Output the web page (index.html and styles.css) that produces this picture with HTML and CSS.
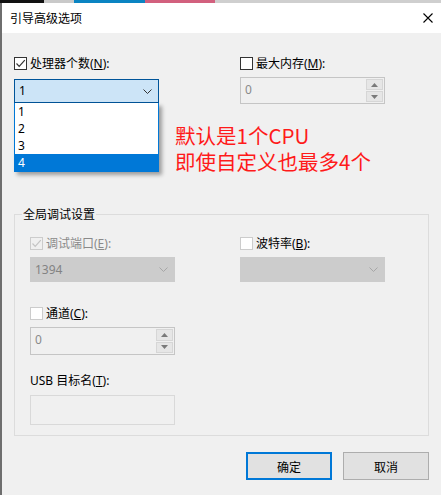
FILE: index.html
```html
<!DOCTYPE html>
<html lang="zh-CN">
<head>
<meta charset="utf-8">
<title>引导高级选项</title>
<link rel="stylesheet" href="styles.css">
</head>
<body>
<div class="strip">
  <span class="seg seg-black"></span>
  <span class="seg seg-gray"></span>
  <span class="seg seg-blue"></span>
  <span class="seg seg-pink"></span>
  <span class="seg seg-rest"></span>
</div>
<div class="win">
  <div class="titlebar">
    <span class="title">引导高级选项</span>
    <svg class="close" width="10" height="10" viewBox="0 0 10 10"><path d="M0.5 0.5 L9.5 9.5 M9.5 0.5 L0.5 9.5" stroke="#000" stroke-width="1.1" fill="none"/></svg>
  </div>
  <div class="content">
    <div class="toprow">
      <div class="col">
        <div class="chk"><span class="box"><svg width="11" height="11" viewBox="0 0 11 11"><path d="M1.5 5.5 L4.2 8.3 L9.8 2.2" stroke="#333" stroke-width="1.2" fill="none"/></svg></span><span>处理器个数(<u>N</u>):</span></div>
        <div class="combo combo-open"><span class="cval">1</span><svg class="chev" width="9" height="5" viewBox="0 0 9 5"><path d="M0.5 0.5 L4.5 4.5 L8.5 0.5" stroke="#333" stroke-width="1" fill="none"/></svg></div>
      </div>
      <div class="col col-right">
        <div class="chk"><span class="box"></span><span>最大内存(<u>M</u>):</span></div>
        <div class="spin spin-top"><span class="sval">0</span><div class="sbtns"><span class="sbtn"><svg width="7" height="4" viewBox="0 0 7 4"><path d="M0 4 L3.5 0 L7 4 Z" fill="#7a7a7a"/></svg></span><span class="sbtn"><svg width="7" height="4" viewBox="0 0 7 4"><path d="M0 0 L3.5 4 L7 0 Z" fill="#7a7a7a"/></svg></span></div></div>
      </div>
      <ul class="droplist">
        <li>1</li>
        <li>2</li>
        <li>3</li>
        <li class="sel">4</li>
      </ul>
      <div class="note"><div class="nline">默认是1个CPU</div><div class="nline">即使自定义也最多4个</div></div>
    </div>

    <fieldset class="group">
      <legend>全局调试设置</legend>
      <div class="grow">
        <div class="col">
          <div class="chk dis"><span class="box box-dis"><svg width="11" height="11" viewBox="0 0 11 11"><path d="M1.5 5.5 L4.2 8.3 L9.8 2.2" stroke="#c4c4c4" stroke-width="1.2" fill="none"/></svg></span><span>调试端口(<u>E</u>):</span></div>
          <div class="combo combo-dis"><span class="cval">1394</span><svg class="chev" width="9" height="5" viewBox="0 0 9 5"><path d="M0.5 0.5 L4.5 4.5 L8.5 0.5" stroke="#a6a6a6" stroke-width="1" fill="none"/></svg></div>
        </div>
        <div class="col col-right2">
          <div class="chk"><span class="box box-light"></span><span>波特率(<u>B</u>):</span></div>
          <div class="combo combo-dis"><span class="cval"></span><svg class="chev" width="9" height="5" viewBox="0 0 9 5"><path d="M0.5 0.5 L4.5 4.5 L8.5 0.5" stroke="#a6a6a6" stroke-width="1" fill="none"/></svg></div>
        </div>
      </div>
      <div class="chk chk-chan"><span class="box box-light"></span><span>通道(<u>C</u>):</span></div>
      <div class="spin spin-chan"><span class="sval">0</span><div class="sbtns"><span class="sbtn"><svg width="7" height="4" viewBox="0 0 7 4"><path d="M0 4 L3.5 0 L7 4 Z" fill="#7a7a7a"/></svg></span><span class="sbtn"><svg width="7" height="4" viewBox="0 0 7 4"><path d="M0 0 L3.5 4 L7 0 Z" fill="#7a7a7a"/></svg></span></div></div>
      <div class="usblabel">USB 目标名(<u>T</u>):</div>
      <div class="textbox"></div>
    </fieldset>

    <div class="buttons">
      <button class="btn btn-primary">确定</button>
      <button class="btn">取消</button>
    </div>
  </div>
</div>
</body>
</html>
```
FILE: styles.css
```css
* { box-sizing: border-box; }
html, body { margin: 0; padding: 0; }
body {
  width: 441px;
  height: 495px;
  overflow: hidden;
  background: #f0f0f0;
  font-family: "Noto Sans", "Noto Sans CJK SC", sans-serif;
  font-size: 12px;
  color: #000;
}
.strip { display: flex; height: 3px; }
.seg { display: block; height: 3px; }
.seg-black { width: 44px; background: #111; }
.seg-gray { width: 30px; background: #c9c9c9; }
.seg-blue { width: 71px; background: #0a84c2; }
.seg-pink { width: 70px; background: #d2607e; }
.seg-rest { flex: 1; background: #cfcfcf; }

.win {
  border-left: 2px solid #6e6e6e;
  height: 492px;
  background: #f0f0f0;
}
.titlebar {
  height: 30px;
  background: #fff;
  display: flex;
  align-items: center;
  justify-content: space-between;
  padding: 0 8px 0 8px;
}
.title {
  font-family: "Noto Sans CJK SC", sans-serif;
  font-size: 12px;
  line-height: 16px;
}

.content {
  padding: 24px 12px 0 12px;
}
.toprow {
  position: relative;
  display: grid;
  grid-template-columns: 226px 145px;
}
.col { display: flex; flex-direction: column; }

.chk {
  display: flex;
  align-items: center;
  height: 13px;
  gap: 3px;
  line-height: 16px;
  white-space: nowrap;
}
.chk u { text-decoration: underline; text-underline-offset: 1px; }
.box {
  width: 13px;
  height: 13px;
  border: 1px solid #333;
  background: #fff;
  display: flex;
  align-items: center;
  justify-content: center;
  flex: none;
}
.box-dis { border-color: #cccccc; background: #f0f0f0; }
.box-light { border-color: #cccccc; background: #fff; }
.dis { color: #8a8a8a; }

.combo {
  width: 145px;
  display: flex;
  align-items: center;
  justify-content: space-between;
  padding: 0 6px 0 4px;
  border: 1px solid #cccccc;
}
.combo-open {
  margin-top: 9px;
  height: 24px;
  background: #cce4f7;
  border-color: #005499;
}
.combo-dis {
  margin-top: 7px;
  height: 25px;
  background: #cccccc;
  color: #838383;
}
.cval { line-height: 16px; }

.spin {
  width: 145px;
  display: flex;
  border: 1px solid #c5c5c5;
  background: #f0f0f0;
  padding: 1px;
}
.spin-top { margin-top: 7px; height: 27px; }
.sval { flex: 1; color: #8a8a8a; padding-left: 3px; line-height: 22px; }
.sbtns {
  width: 17px;
  display: flex;
  flex-direction: column;
  gap: 1px;
}
.sbtn {
  flex: 1;
  background: #e6e6e6;
  border: 1px solid #d6d6d6;
  display: flex;
  align-items: center;
  justify-content: center;
}

.droplist {
  position: absolute;
  left: 0;
  top: 46px;
  width: 145px;
  margin: 0;
  padding: 0;
  list-style: none;
  background: #fff;
  border: 1px solid #0078d7;
  border-top: none;
  box-shadow: 3px 3px 4px rgba(0,0,0,0.35);
}
.droplist li {
  height: 17px;
  line-height: 17px;
  padding-left: 3px;
}
.droplist li.sel { background: #0078d7; color: #fff; }

.note {
  position: absolute;
  left: 161px;
  top: 65px;
  font-family: "Noto Sans CJK SC", sans-serif;
  font-size: 20.5px;
  color: #ff1a1a;
  white-space: nowrap;
  display: flex;
  flex-direction: column;
}
.nline { height: 26px; line-height: 26px; }

.group {
  margin: 102px 0 0 0;
  width: 415px;
  border: 1px solid #dcdcdc;
  padding: 15px 0 10px 15px;
  min-inline-size: 0;
}
.group legend {
  margin-left: -8px;
  padding: 0 1px;
  line-height: 16px;
  font-family: "Noto Sans CJK SC", sans-serif;
}
.grow {
  display: grid;
  grid-template-columns: 210px 145px;
}
.chk-chan { margin-top: 25px; }
.spin-chan { margin-top: 7px; height: 28px; }
.usblabel { margin-top: 18px; line-height: 16px; }
.textbox {
  margin-top: 6px;
  width: 145px;
  height: 30px;
  border: 1px solid #d9d9d9;
  background: #f0f0f0;
}

.buttons {
  width: 415px;
  display: flex;
  justify-content: flex-end;
  gap: 11px;
  margin-top: 16px;
}
.btn {
  width: 86px;
  height: 28px;
  background: #e1e1e1;
  border: 1px solid #adadad;
  font-family: "Noto Sans CJK SC", sans-serif;
  font-size: 12px;
  color: #000;
  padding: 0;
}
.btn-primary { border: 2px solid #0078d7; }
```
